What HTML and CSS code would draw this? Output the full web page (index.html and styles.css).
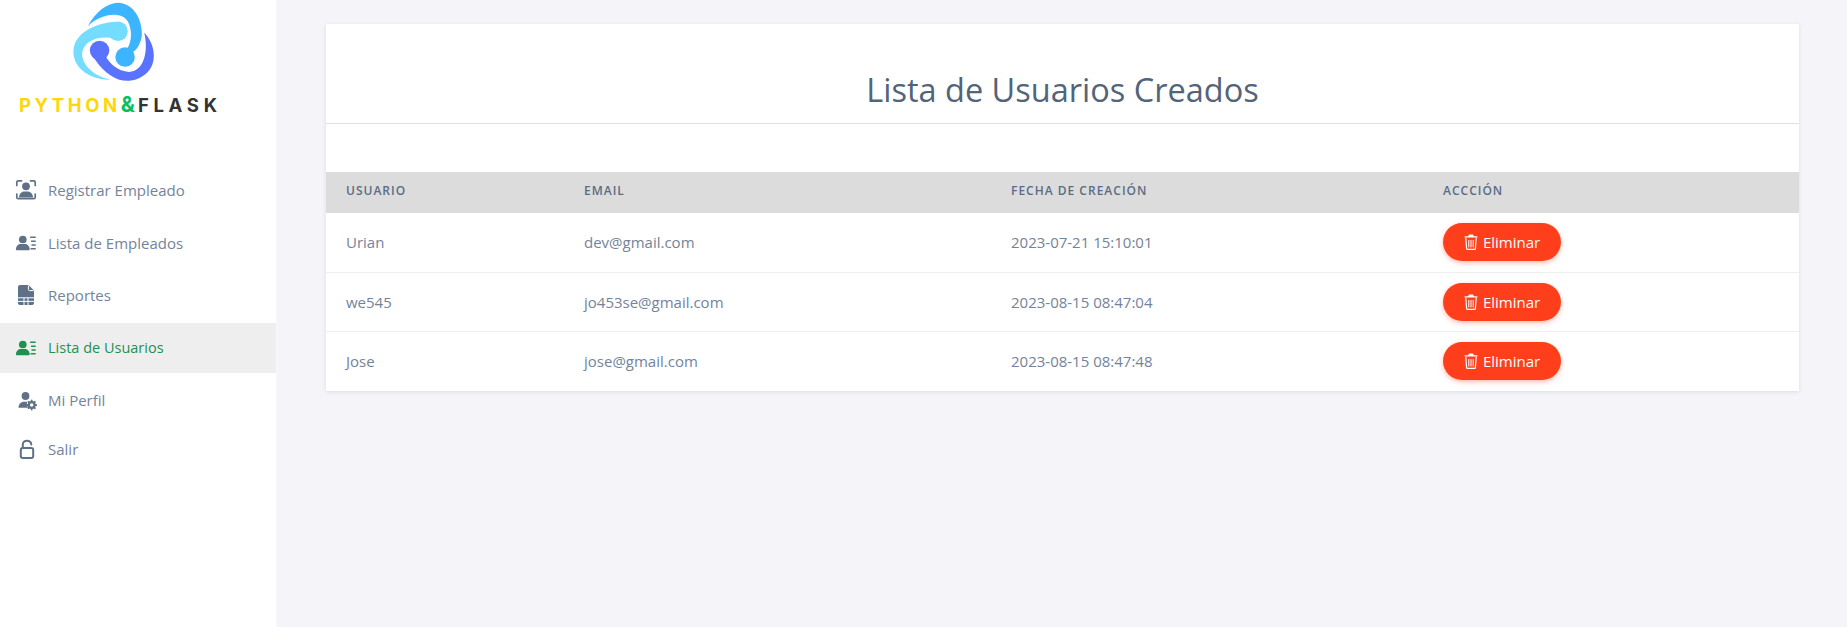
FILE: index.html
```html
<!DOCTYPE html>
<html lang="es">
<head>
<meta charset="utf-8">
<title>Lista de Usuarios</title>
<link rel="stylesheet" href="styles.css">
</head>
<body>
<svg class="defs" width="0" height="0" aria-hidden="true">
  <defs>
    <symbol id="i-list" viewBox="-1 -4 24 24">
      <circle cx="7.500" cy="4.200" r="4.200"/>
      <path d="M0 15.200c0-3.800 2.600-6 5.400-6h4.200c2.800 0 5.400 2.200 5.400 6 0 .4-.3.8-.8.8H.8c-.5 0-.8-.4-.8-.8z"/>
      <path d="M15.500 1h6.100v1.600H15.500zM16.500 5.200h5.100v1.600H16.500zM17 9.400h4.600V11H17zM16 13.400h5.600V15H16z"/>
    </symbol>
    <symbol id="i-trash" viewBox="0 0 14 16">
      <path d="M5 .6h4l.8 1.600H13.400v1.300H.6V2.200h3.600z"/>
      <path fill="none" stroke="currentColor" stroke-width="1.200" d="M1.800 3.800l.8 10.600c0 .5.5 1 1 1h6.800c.5 0 1-.5 1-1l.8-10.600"/>
      <path fill="none" stroke="currentColor" stroke-width="1" d="M4.800 6v7.400M7 6v7.400M9.200 6v7.400"/>
    </symbol>
  </defs>
</svg>
<div class="app">
  <aside class="sidebar">
    <div class="brand">
      <svg class="logo" viewBox="200 0 280 250" aria-hidden="true">
        <path class="lb" d="M262 78C285 35 320 8 352 8C400 10 425 60 423 105C420 130 408 150 392 158L378 148C393 125 396 90 380 62C360 32 300 40 262 78Z"/>
        <circle class="lb" cx="373" cy="170" r="29"/>
        <path class="ll" d="M345 65C290 68 220 95 219 155C220 210 280 240 330 237C290 230 245 200 245 160C248 122 290 104 345 114Z"/>
        <circle class="ll" cx="352" cy="93" r="29"/>
        <path class="li" d="M314 166C328 190 350 212 385 214C425 214 445 160 430 97C462 130 470 185 440 215C410 245 365 248 335 228C310 212 295 195 280 172Z"/>
        <circle class="li" cx="297" cy="150" r="29"/>
      </svg>
      <div class="wordmark"><span class="w-py">PYTHON</span><span class="w-amp">&amp;</span><span class="w-fl">FLASK</span></div>
    </div>
    <nav class="nav">
      <a class="nav-item">
        <svg class="ico" viewBox="0 0 22 22"><path class="stk" d="M1.800 6.500V3.300C1.800 2.400 2.400 1.800 3.300 1.800H6.500M15.500 1.800h3.200c.9 0 1.500.6 1.500 1.500V6.500M1.800 15v3.200c0 .9.6 1.500 1.500 1.500H18.700c.9 0 1.500-.6 1.500-1.500V15"/><circle cx="11" cy="7.300" r="3.900"/><path d="M4 18.500c0-3.800 2.800-6 5.300-6h3.400c2.500 0 5.300 2.200 5.300 6z"/></svg>
        <span>Registrar Empleado</span>
      </a>
      <a class="nav-item">
        <svg class="ico"><use href="#i-list"/></svg>
        <span>Lista de Empleados</span>
      </a>
      <a class="nav-item">
        <svg class="ico" viewBox="0 0 22 22"><path d="M3 3C3 1.900 3.900 1 5 1H13.500L19 6.500V19C19 20.100 18.100 21 17 21H5C3.900 21 3 20.100 3 19z"/><path class="fold" d="M13.400 1.500V5.500C13.400 6.100 13.900 6.600 14.500 6.600H18.500"/><path class="grid" d="M3 13.800H19M3 17.400H19M9 13.800V21M13 13.800V21"/></svg>
        <span>Reportes</span>
      </a>
      <a class="nav-item is-active">
        <svg class="ico"><use href="#i-list"/></svg>
        <span>Lista de Usuarios</span>
      </a>
      <a class="nav-item">
        <svg class="ico" viewBox="0 0 22 22"><circle cx="10.500" cy="7" r="3.900"/><path d="M3.500 18.800c0-3.800 2.600-6 5.400-6h3.300c-.7 1.800-.2 4.400 1.300 6z"/><circle class="stk gear" cx="16.700" cy="16" r="2.900"/><path class="stk gear-t" d="M16.700 11.500v1M16.700 19.500v1M12.200 16h1M20.200 16h1M13.500 12.800l.8.800M19.100 18.400l.8.800M19.900 12.800l-.8.800M14.300 18.400l-.8.800"/></svg>
        <span>Mi Perfil</span>
      </a>
      <a class="nav-item nav-last">
        <svg class="ico" viewBox="0 0 22 22"><path class="stk lock" d="M7.800 10V6.500C7.800 4 9.500 2.800 12 2.800C14.300 2.800 16 4 16.300 6.500"/><rect class="stk lock" x="5.800" y="10" width="12.400" height="10" rx="2"/></svg>
        <span>Salir</span>
      </a>
    </nav>
  </aside>
  <main class="main">
    <section class="card">
      <header class="card-head"><h1>Lista de Usuarios Creados</h1></header>
      <table class="users">
        <colgroup><col class="c1"><col class="c2"><col class="c3"><col class="c4"></colgroup>
        <thead>
          <tr><th>Usuario</th><th>Email</th><th>Fecha de Creación</th><th>Accción</th></tr>
        </thead>
        <tbody>
          <tr><td>Urian</td><td>dev@gmail.com</td><td>2023-07-21 15:10:01</td><td><button class="btn"><svg class="btn-ico"><use href="#i-trash"/></svg>Eliminar</button></td></tr>
          <tr><td>we545</td><td>jo453se@gmail.com</td><td>2023-08-15 08:47:04</td><td><button class="btn"><svg class="btn-ico"><use href="#i-trash"/></svg>Eliminar</button></td></tr>
          <tr><td>Jose</td><td>jose@gmail.com</td><td>2023-08-15 08:47:48</td><td><button class="btn"><svg class="btn-ico"><use href="#i-trash"/></svg>Eliminar</button></td></tr>
        </tbody>
      </table>
    </section>
  </main>
</div>
</body>
</html>
```
FILE: styles.css
```css
* { box-sizing: border-box; }
html, body { margin: 0; height: 100%; }
body {
  font-family: "Open Sans", "Liberation Sans", sans-serif;
  background: #f4f4f9;
  color: #6c7a8d;
  overflow: hidden;
}
.defs { position: absolute; }
.app { display: flex; height: 627px; }

.sidebar {
  width: 277px;
  flex: none;
  background: #fff;
  border-right: 1px solid #f8f8fb;
}
.brand { height: 165px; display: flex; flex-direction: column; align-items: flex-start; }
.logo { width: 94px; height: 84px; margin-left: 67px; flex: none; display: block; }
.lb { fill: #3db4ff; }
.ll { fill: #74dcff; }
.li { fill: #5a73ff; }
.wordmark {
  margin: 10px 0 0 19px;
  font-family: Inter, "Liberation Sans", sans-serif;
  font-weight: 700;
  font-size: 18.500px;
  line-height: 22px;
  white-space: nowrap;
  display: flex;
}
.w-py { color: #ffd60a; letter-spacing: 3.600px; }
.w-amp { color: #0bbf5f; margin-right: 3px; font-size: 21px; }
.w-fl { color: #333; letter-spacing: 4.700px; }

.nav { display: flex; flex-direction: column; }
.nav-item {
  height: 50px;
  margin-bottom: 2.500px;
  padding-left: 15px;
  display: flex;
  align-items: center;
  gap: 11px;
  font-size: 15px;
  color: #74839a;
  fill: #5f7186;
}
.nav-last { margin-top: -4px; }
.ico { width: 22px; height: 22px; flex: none; overflow: visible; }
.stk { fill: none; stroke: #5f7186; stroke-width: 1.700; stroke-linecap: round; }
.gear { stroke-width: 2.200; }
.gear-t { stroke-width: 1.800; }
.lock { stroke-width: 2; }
.grid { fill: none; stroke: #fff; stroke-width: 1; }
.fold { fill: none; stroke: #fff; stroke-width: 1; }
.is-active {
  background: #eeeeee;
  color: #1e9150;
  fill: #1e9150;
  font-weight: 500;
  font-size: 14.500px;
}

.main { flex: 1; padding: 24px 48px 0 49px; min-width: 0; }
.card {
  background: #fff;
  box-shadow: 0 1px 4px rgba(60, 70, 90, .12);
}
.card-head {
  height: 100px;
  border-bottom: 1px solid #dee0e4;
  display: flex;
  align-items: center;
  justify-content: center;
}
.card-head h1 {
  margin: 33px 0 0;
  font-weight: 400;
  font-size: 32.500px;
  line-height: 44px;
  color: #526479;
}
.users {
  width: 100%;
  margin-top: 48px;
  border-collapse: collapse;
  table-layout: fixed;
}
.c1 { width: 238px; }
.c2 { width: 427px; }
.c3 { width: 432px; }
.users th {
  height: 41px;
  background: #dcdcdd;
  padding: 0 20px 4px;
  text-align: left;
  font-size: 12px;
  font-weight: 600;
  letter-spacing: 1px;
  text-transform: uppercase;
  color: #5a6d83;
}
.users td {
  height: 59px;
  padding: 0 20px;
  font-size: 15px;
  color: #74839a;
  border-bottom: 1px solid #eceef0;
}
.users tr:last-child td { height: 60px; border-bottom: 0; }
.btn {
  width: 118px;
  height: 38px;
  border: 0;
  border-radius: 19px;
  background: #ff3f1c;
  color: #fff;
  font: 500 15px "Open Sans", sans-serif;
  display: flex;
  align-items: center;
  justify-content: center;
  gap: 5px;
  box-shadow: 0 2px 5px rgba(255, 63, 28, .35);
}
.btn-ico { width: 14px; height: 16px; fill: currentColor; flex: none; }
```
